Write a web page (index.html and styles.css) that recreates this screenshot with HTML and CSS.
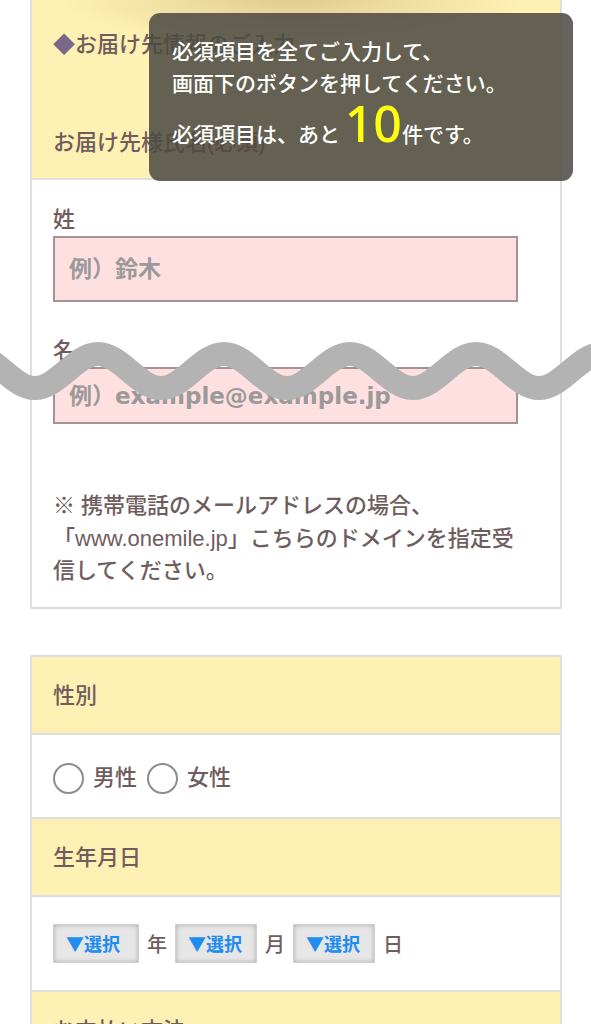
FILE: index.html
```html
<!DOCTYPE html>
<html lang="ja">
<head>
    <meta charset="UTF-8">
    <meta name="viewport" content="width=device-width, initial-scale=1.0">
    <title>お届け先情報</title>

    <link rel="stylesheet" href="styles.css">
</head>
<body>
    <div class="page">
        <div class="card">
            <div class="sec-head top">
                <h2 class="sec-title"><span class="dia">◆</span>お届け先情報のご入力</h2>
                <h3 class="sec-sub">お届け先様氏名<span class="req">(必須)</span></h3>
            </div>
            <div class="sec-body">
                <div class="field">
                    <label for="lastName">姓</label>
                    <input type="text" id="lastName" class="text-input" placeholder="例）鈴木">
                </div>
                <div class="field">
                    <label for="email">名</label>
                    <input type="text" id="email" class="text-input short" placeholder="例）example@example.jp">
                </div>
                <p class="note">※ 携帯電話のメールアドレスの場合、<br>「www.onemile.jp」こちらのドメインを指定受<br>信してください。</p>
            </div>
        </div>

        <div class="card second">
            <div class="sec-head">性別</div>
            <div class="sec-body radios">
                <label class="radio"><input type="radio" name="sex"><span>男性</span></label>
                <label class="radio"><input type="radio" name="sex"><span>女性</span></label>
            </div>
            <div class="sec-head">生年月日</div>
            <div class="sec-body birth">
                <select class="pick year"><option>▼選択</option></select>
                <span>年</span>
                <select class="pick"><option>▼選択</option></select>
                <span>月</span>
                <select class="pick"><option>▼選択</option></select>
                <span>日</span>
            </div>
            <div class="sec-head">お支払い方法</div>
        </div>
    </div>

    <svg class="wave" width="591" height="80" viewBox="0 0 591 80">
        <path d="M -91 58 C -68.3 58, -50.7 24, -28 24 S 12.3 58, 35 58 S 75.3 24, 98 24 S 138.3 58, 161 58 S 201.3 24, 224 24 S 264.3 58, 287 58 S 327.3 24, 350 24 S 390.3 58, 413 58 S 453.3 24, 476 24 S 516.3 58, 539 58 S 579.3 24, 602 24 S 642.3 58, 665 58"
              fill="none" stroke="#b3b3b3" stroke-width="24"/>
    </svg>

    <div class="notice">
        <p>必須項目を全てご入力して、<br>画面下のボタンを押してください。</p>
        <p class="count">必須項目は、あと <span class="num">10</span>件です。</p>
    </div>
</body>
</html>
```

FILE: styles.css
```css
*{
    margin: 0px;
    padding: 0px;
    box-sizing: border-box;
}

body{
    font-family: "Liberation Sans", "Noto Sans CJK JP", sans-serif;
    color: #6f5d5d;
    font-size: 22px;
    background: #fff;
    position: relative;
    overflow: hidden;
}

.page{
    padding: 0 29px 40px 30px;
}

.card{
    width: 532px;
    border: 2px solid #dedede;
    border-top: none;
}

.card.second{
    margin-top: 46px;
    border-top: 2px solid #dedede;
}

.sec-head{
    background: #fff0b3;
    padding: 24px 21px 22px;
    line-height: 30px;
    font-weight: 500;
    border-bottom: 2px solid #dedede;
}

.sec-head.top{
    padding: 30px 21px 20px;
    background: radial-gradient(ellipse 230px 45px at 260px 0px, rgba(150, 125, 60, 0.3), rgba(150, 125, 60, 0)), #fff0b3;
}

.sec-title,
.sec-sub{
    font-size: 22px;
    font-weight: 500;
    line-height: 30px;
}

.sec-title .dia{
    color: #7a6888;
}

.sec-sub{
    margin-top: 68px;
}

.sec-sub .req{
    color: #b04a4a;
}

.sec-body{
    background: #fff;
    padding: 25px 21px 19px;
    border-bottom: 2px solid #dedede;
}

.card .sec-body:last-child{
    border-bottom: none;
}

.field + .field{
    margin-top: 34px;
}

.field label{
    display: block;
    line-height: 30px;
    font-weight: 500;
}

.text-input{
    display: block;
    margin-top: 1px;
    width: 465px;
    height: 66px;
    background: #ffe0e0;
    border: 2px solid #a39393;
    outline: none;
    padding: 0 14px;
    font-family: "DejaVu Sans", "Noto Sans CJK JP", sans-serif;
    font-size: 23px;
    font-weight: 700;
    color: #6f5d5d;
}

.text-input.short{
    height: 57px;
}

.text-input::placeholder{
    color: #9a9a9a;
}

.note{
    margin-top: 66px;
    line-height: 32.5px;
    font-weight: 500;
}

.radios{
    display: flex;
    align-items: center;
    padding: 28px 21px 23px;
}

.radio{
    display: flex;
    align-items: center;
    margin-right: 10px;
    line-height: 30px;
    font-weight: 500;
}

.radio input{
    appearance: none;
    width: 31px;
    height: 31px;
    border: 2px solid #8c8c8c;
    border-radius: 50%;
    background: #fff;
    margin-right: 9px;
}

.birth{
    display: flex;
    align-items: center;
    gap: 8px;
    padding: 27px 21px 27px;
    font-size: 20px;
    font-weight: 500;
}

.pick{
    appearance: none;
    width: 82px;
    height: 39px;
    background: #e6e6e6;
    border: 1px solid #d0d0d0;
    box-shadow: inset 0 0 4px #a8a8a8;
    border-radius: 0;
    padding: 0 12px;
    font-family: "Noto Sans CJK JP", sans-serif;
    font-size: 18px;
    font-weight: 700;
    color: #1e8cf0;
}

.pick.year{
    width: 86px;
}

.wave{
    position: absolute;
    left: 0;
    top: 330px;
}

.notice{
    position: absolute;
    left: 149px;
    top: 13px;
    width: 424px;
    height: 168px;
    border-radius: 11px;
    background: rgba(75, 73, 66, 0.86);
    color: #fff;
    padding: 21px 23px 0;
    font-family: "Noto Sans CJK JP", sans-serif;
    font-size: 21px;
    font-weight: 500;
    line-height: 32px;
}

.notice .count{
    line-height: 50px;
}

.notice .num{
    font-family: "Noto Sans", sans-serif;
    font-size: 50px;
    font-weight: 500;
    line-height: 1;
    color: #ffff10;
}
```
